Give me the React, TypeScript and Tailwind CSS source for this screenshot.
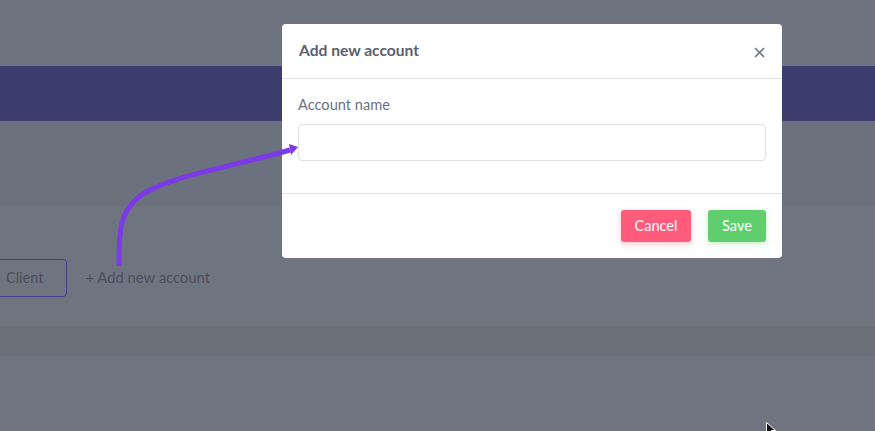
import React from "react";

export default function App() {
  return (
    <div className="relative h-[431px] w-full overflow-hidden bg-[#6f7580] font-['Lato',sans-serif]">
      <div className="flex h-full flex-col">
        <div className="h-[66px] bg-[#6e747f]" />
        <div className="h-[55px] bg-[#3c3e6e]" />
        <div className="h-[85px] bg-[#6c727d]" />
        <div className="flex h-[120px] items-center bg-[#6f7580] pt-[23px]">
          <div className="ml-[-12px] flex h-[38px] items-center rounded-[4px] border border-[#3f418c] pl-[17px] pr-[23px] text-[14.5px] text-[#4a4e5b]">
            Client
          </div>
          <div className="ml-[18px] text-[14.8px] text-[#4a4e5b]">+ Add new account</div>
        </div>
        <div className="h-[30px] bg-[#6a6f7a]" />
        <div className="flex-1 bg-[#6f7580]" />
      </div>

      {/* Modal */}
      <div className="absolute left-[282px] top-[24px] flex w-[500px] flex-col rounded-[4px] bg-white">
        <div className="flex h-[55px] items-center justify-between border-b border-[#e1e1e4] pl-[17px] pr-[17px]">
          <span className="text-[15.6px] font-bold text-[#5b6170]">Add new account</span>
          <svg width="11" height="11" viewBox="0 0 11 11" className="mt-[2px]">
            <path d="M1 1 L10 10 M10 1 L1 10" stroke="#6f7480" strokeWidth="1.6" />
          </svg>
        </div>
        <div className="flex flex-col pl-[16px] pr-[16px] pb-[32px] pt-[16px]">
          <label className="text-[14.6px] leading-[20px] text-[#6b7182]">Account name</label>
          <div className="mt-[9px] h-[37px] rounded-[4px] border border-[#dfdfe3] bg-white" />
        </div>
        <div className="flex justify-end gap-[17px] border-t border-[#e1e1e4] px-[16px] pb-[16px] pt-[16px]">
          <button className="h-[32px] w-[70px] rounded-[3px] bg-[#ff5c7c] text-[14.5px] text-white shadow-[0_2px_6px_rgba(255,92,124,0.35)]">
            Cancel
          </button>
          <button className="h-[32px] w-[58px] rounded-[3px] bg-[#5fcf6e] text-[14.5px] text-white shadow-[0_2px_6px_rgba(95,207,110,0.35)]">
            Save
          </button>
        </div>
      </div>

      {/* Arrow */}
      <svg className="absolute left-0 top-0" width="875" height="431" viewBox="0 0 875 431">
        <path
          d="M119 266 C119 232 119 212 140 196 C165 177 230 167 290 150"
          fill="none"
          stroke="#7b3ae6"
          strokeWidth="5"
        />
        <polygon points="298,147 289,144 291,155" fill="#7b3ae6" />
      </svg>

      {/* Cursor */}
      <svg className="absolute left-[766px] top-[422px]" width="12" height="12" viewBox="0 0 12 12">
        <path d="M0.5 0.5 L0.5 12 L3.5 9 L6 12 L8 12 L5.5 8.5 L9.5 8.5 Z" fill="#111" stroke="#fff" strokeWidth="1" />
      </svg>
    </div>
  );
}
